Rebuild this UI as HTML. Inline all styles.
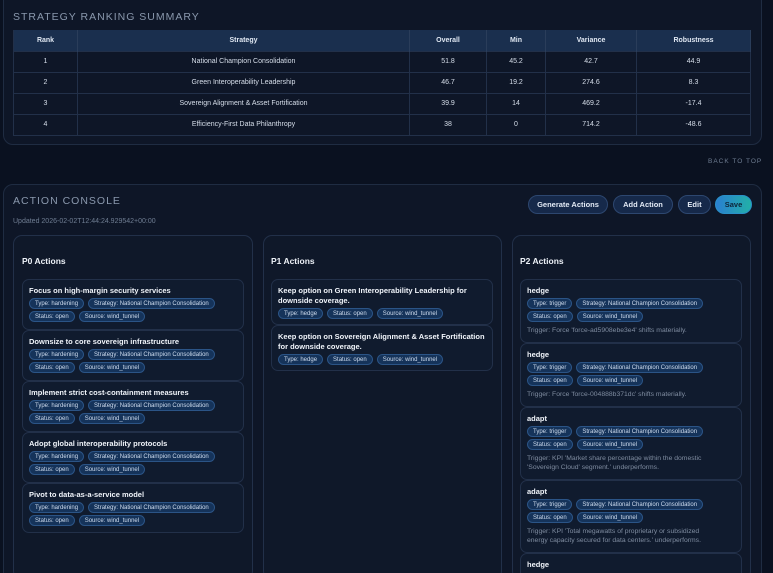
<!DOCTYPE html>
<html style="width:773px;height:573px;overflow:hidden"><head><meta charset="utf-8"><style>
*{box-sizing:border-box;margin:0;padding:0}
body{width:773px;height:573px;overflow:hidden;background:#0a1120;font-family:"Liberation Sans",sans-serif;color:#e6ecf5;position:relative}
.panel{position:absolute;background:#0e1627;border:1px solid #1f2c42;border-radius:10px}
.h{position:absolute;font-size:10.5px;letter-spacing:1px;color:#8a98ad}
table{position:absolute;left:13px;top:30px;width:738px;border-collapse:collapse;font-size:7px;text-align:center}
th{background:#1a2f4e;height:21px;font-weight:bold;color:#dfe7f2;border-right:1px solid #2a3d5a}
td{height:21px;border-top:1px solid #223049;border-right:1px solid #223049;color:#d6deea}
tr td:first-child,tr th:first-child{border-left:1px solid #223049}
tr:last-child td{border-bottom:1px solid #223049}
.btn{position:absolute;top:195px;height:19px;border-radius:10px;background:#16294a;border:1px solid #2d4770;font-size:7.5px;font-weight:bold;color:#e3eaf5;text-align:center;line-height:17px}
.col{position:absolute;top:235px;height:345px;border:1px solid #223049;border-radius:9px;background:#0f1829}
.ct{position:absolute;top:256px;font-size:8.5px;font-weight:bold;color:#eef2f8}
.card{position:absolute;border:1px solid #223049;border-radius:7px;background:#101b2e;padding:6px 7px 0 6px}
.t{font-size:7.5px;font-weight:bold;color:#f0f4fa;line-height:10px;margin-bottom:2px}
.row{display:flex;gap:4px;white-space:nowrap}
.chip{font-size:6px;color:#cfdcee;background:#15335a;border:1px solid #2b5486;border-radius:6px;padding:0 5px;height:11px;line-height:10px;margin-bottom:2px;white-space:nowrap}
.tr{font-size:6.8px;color:#7f8ca0;line-height:9px;margin-top:2px}
</style></head><body>
<div class="panel" style="left:3px;top:-10px;width:759px;height:155px"></div>
<div class="h" style="left:13px;top:11px">STRATEGY RANKING SUMMARY</div>
<table>
<tr><th style="width:64px">Rank</th><th style="width:332px">Strategy</th><th style="width:77px">Overall</th><th style="width:59px">Min</th><th style="width:91px">Variance</th><th>Robustness</th></tr>
<tr><td>1</td><td>National Champion Consolidation</td><td>51.8</td><td>45.2</td><td>42.7</td><td>44.9</td></tr>
<tr><td>2</td><td>Green Interoperability Leadership</td><td>46.7</td><td>19.2</td><td>274.6</td><td>8.3</td></tr>
<tr><td>3</td><td>Sovereign Alignment &amp; Asset Fortification</td><td>39.9</td><td>14</td><td>469.2</td><td>-17.4</td></tr>
<tr><td>4</td><td>Efficiency-First Data Philanthropy</td><td>38</td><td>0</td><td>714.2</td><td>-48.6</td></tr>
</table>
<div style="position:absolute;left:708px;top:158px;font-size:6.5px;letter-spacing:1px;color:#6f7d92">BACK TO TOP</div>
<div class="panel" style="left:3px;top:184px;width:759px;height:400px"></div>
<div class="h" style="left:13px;top:195px">ACTION CONSOLE</div>
<div style="position:absolute;left:13px;top:218px;font-size:7px;color:#6f7d92">Updated 2026-02-02T12:44:24.929542+00:00</div>
<div class="btn" style="left:528px;width:80px">Generate Actions</div>
<div class="btn" style="left:613px;width:60px">Add Action</div>
<div class="btn" style="left:678px;width:33px">Edit</div>
<div class="btn" style="left:715px;width:37px;background:linear-gradient(90deg,#2a7fd0,#22b0a8);border-color:#2a90c8;color:#0e2438">Save</div>

<div class="col" style="left:13px;width:240px"></div>
<div class="col" style="left:263px;width:239px"></div>
<div class="col" style="left:512px;width:239px"></div>
<div class="ct" style="left:22px">P0 Actions</div>
<div class="ct" style="left:271px">P1 Actions</div>
<div class="ct" style="left:520px">P2 Actions</div>

<div class="card" style="left:22px;top:279px;width:222px;height:51px"><div class="t">Focus on high-margin security services</div><div class="row"><span class="chip">Type: hardening</span><span class="chip">Strategy: National Champion Consolidation</span></div><div class="row"><span class="chip">Status: open</span><span class="chip">Source: wind_tunnel</span></div></div>
<div class="card" style="left:22px;top:330px;width:222px;height:51px"><div class="t">Downsize to core sovereign infrastructure</div><div class="row"><span class="chip">Type: hardening</span><span class="chip">Strategy: National Champion Consolidation</span></div><div class="row"><span class="chip">Status: open</span><span class="chip">Source: wind_tunnel</span></div></div>
<div class="card" style="left:22px;top:381px;width:222px;height:51px"><div class="t">Implement strict cost-containment measures</div><div class="row"><span class="chip">Type: hardening</span><span class="chip">Strategy: National Champion Consolidation</span></div><div class="row"><span class="chip">Status: open</span><span class="chip">Source: wind_tunnel</span></div></div>
<div class="card" style="left:22px;top:432px;width:222px;height:51px"><div class="t">Adopt global interoperability protocols</div><div class="row"><span class="chip">Type: hardening</span><span class="chip">Strategy: National Champion Consolidation</span></div><div class="row"><span class="chip">Status: open</span><span class="chip">Source: wind_tunnel</span></div></div>
<div class="card" style="left:22px;top:483px;width:222px;height:50px"><div class="t">Pivot to data-as-a-service model</div><div class="row"><span class="chip">Type: hardening</span><span class="chip">Strategy: National Champion Consolidation</span></div><div class="row"><span class="chip">Status: open</span><span class="chip">Source: wind_tunnel</span></div></div>

<div class="card" style="left:271px;top:279px;width:222px;height:46px"><div class="t">Keep option on Green Interoperability Leadership for downside coverage.</div><div class="row"><span class="chip">Type: hedge</span><span class="chip">Status: open</span><span class="chip">Source: wind_tunnel</span></div></div>
<div class="card" style="left:271px;top:325px;width:222px;height:46px"><div class="t">Keep option on Sovereign Alignment &amp; Asset Fortification for downside coverage.</div><div class="row"><span class="chip">Type: hedge</span><span class="chip">Status: open</span><span class="chip">Source: wind_tunnel</span></div></div>

<div class="card" style="left:520px;top:279px;width:222px;height:64px"><div class="t">hedge</div><div class="row"><span class="chip">Type: trigger</span><span class="chip">Strategy: National Champion Consolidation</span></div><div class="row"><span class="chip">Status: open</span><span class="chip">Source: wind_tunnel</span></div><div class="tr">Trigger: Force 'force-ad5908ebe3e4' shifts materially.</div></div>
<div class="card" style="left:520px;top:343px;width:222px;height:64px"><div class="t">hedge</div><div class="row"><span class="chip">Type: trigger</span><span class="chip">Strategy: National Champion Consolidation</span></div><div class="row"><span class="chip">Status: open</span><span class="chip">Source: wind_tunnel</span></div><div class="tr">Trigger: Force 'force-004888b371dc' shifts materially.</div></div>
<div class="card" style="left:520px;top:407px;width:222px;height:73px"><div class="t">adapt</div><div class="row"><span class="chip">Type: trigger</span><span class="chip">Strategy: National Champion Consolidation</span></div><div class="row"><span class="chip">Status: open</span><span class="chip">Source: wind_tunnel</span></div><div class="tr">Trigger: KPI 'Market share percentage within the domestic<br>'Sovereign Cloud' segment.' underperforms.</div></div>
<div class="card" style="left:520px;top:480px;width:222px;height:73px"><div class="t">adapt</div><div class="row"><span class="chip">Type: trigger</span><span class="chip">Strategy: National Champion Consolidation</span></div><div class="row"><span class="chip">Status: open</span><span class="chip">Source: wind_tunnel</span></div><div class="tr">Trigger: KPI 'Total megawatts of proprietary or subsidized<br>energy capacity secured for data centers.' underperforms.</div></div>
<div class="card" style="left:520px;top:553px;width:222px;height:30px"><div class="t">hedge</div></div>
</body></html>
